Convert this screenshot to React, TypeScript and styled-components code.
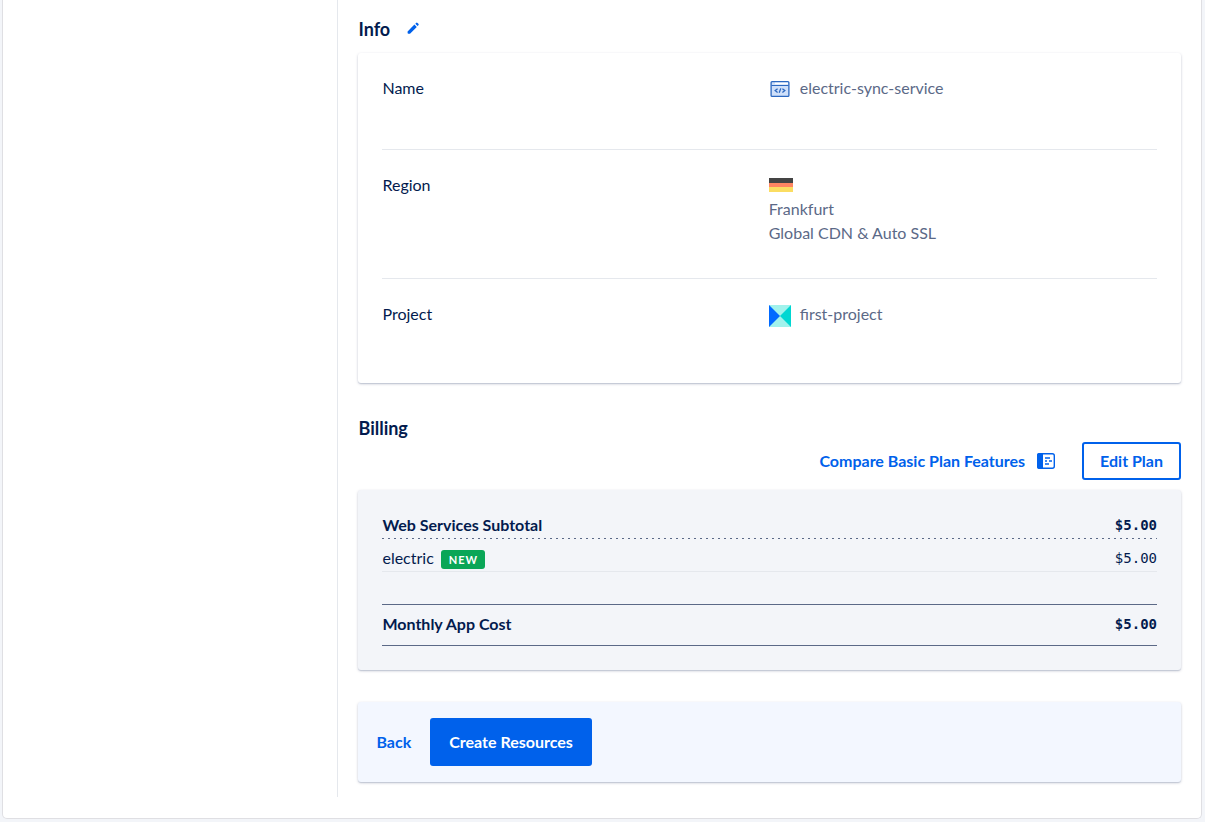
import React from "react";
import styled, { createGlobalStyle } from "styled-components";

const Global = createGlobalStyle`
  * { box-sizing: border-box; }
  body {
    margin: 0;
    background: #f3f5f9;
    color: #031b4e;
    font: 400 16px/24px Lato, "Open Sans", sans-serif;
  }
  button { font: inherit; cursor: pointer; }
`;

const Frame = styled.div`
  display: flex;
  margin: 0 3px 3px 2px;
  padding-bottom: 21px;
  background: #fff;
  border: 1px solid #dfdfe3;
  border-top: 0;
  border-radius: 0 0 5px 5px;
`;

const Sidebar = styled.aside`
  flex: 0 0 28%;
  border-right: 1px solid #e5e8ed;
`;

const Main = styled.main`
  flex: 1;
  min-width: 0;
  padding: 17px 20px 15px;
`;

const Heading = styled.h2`
  margin: 0;
  font-size: 18px;
  line-height: 24px;
  font-weight: 700;
`;

const HeadingRow = styled.div`
  display: flex;
  align-items: center;
  gap: 15px;
  margin-bottom: 12px;
`;

const IconButton = styled.button`
  display: flex;
  padding: 0;
  border: 0;
  background: none;
  color: #0061eb;
`;

const Card = styled.section<{ $fill?: string }>`
  background: ${(p) => p.$fill ?? "#fff"};
  border-radius: 3px;
  box-shadow: 0 1px 3px rgba(3, 27, 78, 0.2), 0 1px 1px rgba(3, 27, 78, 0.12);
`;

const InfoCard = styled(Card)`
  padding: 0 24px 8px;
  margin-bottom: 33px;
`;

const InfoList = styled.dl`
  margin: 0;
`;

const InfoRow = styled.div`
  display: grid;
  grid-template-columns: calc(50% - 1px) 1fr;
  padding: 23px 0 33px;
  & + & { border-top: 1px solid #e5e8ed; }
`;

const Term = styled.dt`
  min-height: 40px;
`;

const Value = styled.dd`
  margin: 0;
  color: #5b6987;
  svg { display: block; }
`;

const IconValue = styled.div`
  display: flex;
  gap: 9px;
  svg { margin-top: 3px; }
`;

const FlagLine = styled.div`
  padding: 5px 0;
`;

const PlanBar = styled.div`
  display: flex;
  justify-content: flex-end;
  align-items: center;
  gap: 26px;
  margin: 2px 0 10px;
`;

const TextLink = styled.a`
  display: flex;
  align-items: center;
  gap: 11px;
  color: #0061eb;
  font-weight: 700;
  text-decoration: none;
`;

const OutlineButton = styled.button`
  padding: 5px 16px;
  border: 2px solid #0061eb;
  border-radius: 3px;
  background: #fff;
  color: #0061eb;
  && { font-weight: 700; }
`;

const BillingCard = styled(Card)`
  padding: 24px;
  margin-bottom: 32px;
`;

const BillingTable = styled.table`
  width: 100%;
  border-collapse: collapse;
  th, td { padding: 0; font-weight: inherit; text-align: left; }
  td { text-align: right; font-family: "DejaVu Sans Mono", monospace; font-size: 14px; }
`;

const SubtotalRow = styled.tr`
  height: 25px;
  font-weight: 700;
  background: repeating-linear-gradient(90deg, #5b6987 0 2px, transparent 2px 6px) bottom / 100% 1px no-repeat;
  && > * { padding-bottom: 4px; line-height: 20px; }
`;

const ItemRow = styled.tr`
  height: 32px;
  border-bottom: 1px solid #e5e8ed;
  && > * { padding-top: 7px; }
`;

const SpacerRow = styled.tr`
  height: 33px;
`;

const TotalRow = styled.tr`
  height: 41px;
  font-weight: 700;
  border-top: 1px solid #5b6987;
  border-bottom: 1px solid #5b6987;
  && > * { padding-bottom: 2px; }
`;

const Badge = styled.span`
  display: inline-block;
  margin-left: 7px;
  padding: 0 7px 0 8px;
  border-radius: 3px;
  background: #0aa657;
  color: #fff;
  font-size: 11px;
  line-height: 19px;
  font-weight: 700;
  letter-spacing: 1px;
`;

const ActionCard = styled(Card)`
  display: flex;
  align-items: center;
  gap: 19px;
  padding: 16px 18px;
`;

const PrimaryButton = styled.button`
  height: 48px;
  padding: 0 19px;
  border: 0;
  border-radius: 3px;
  background: #0061eb;
  color: #fff;
  && { font-weight: 700; }
`;

const PencilIcon = () => (
  <svg width="16" height="16" viewBox="0 0 16 16" fill="currentColor" aria-hidden="true">
    <path d="M2.6 10.4 9.4 3.6l2.4 2.4-6.8 6.8H3.4a.8.8 0 0 1-.8-.8zM10.3 2.7l.8-.8a1 1 0 0 1 1.4 0l.9.9a1 1 0 0 1 0 1.4l-.8.8z" />
  </svg>
);

const ServiceIcon = () => (
  <svg width="22" height="22" viewBox="0 0 22 22" fill="none" aria-hidden="true">
    <rect x="2.1" y="2.6" width="17.8" height="14.8" rx="1" fill="#cfe0fa" stroke="#2c68c0" strokeWidth="1.3" />
    <path d="M6 4.5h13" stroke="#fff" strokeWidth="1.6" />
    <path d="M2.5 6.5h17" stroke="#2c68c0" />
    <path d="M8.6 9.8 6.2 11.6l2.4 1.8M13.4 9.8l2.4 1.8-2.4 1.8M11.8 9.4l-1.6 4.4" stroke="#2c68c0" strokeWidth="1.3" />
  </svg>
);

const GermanyFlag = () => (
  <svg width="24" height="14" viewBox="0 0 24 14" role="img" aria-label="Germany">
    <path fill="#444" d="M0 0h24v5H0z" />
    <path fill="#ff8562" d="M0 5h24v4H0z" />
    <path fill="#fbdd62" d="M0 9h24v5H0z" />
  </svg>
);

const ProjectIcon = () => (
  <svg width="22" height="22" viewBox="0 0 22 22" aria-hidden="true">
    <path fill="#a1f2ec" d="M0 0h22v22H0z" />
    <path fill="#0069ff" d="M0 0l11 11L0 22z" />
    <path fill="#00d7d2" d="M22 0 11 11l11 11z" />
  </svg>
);

const PanelIcon = () => (
  <svg width="20" height="20" viewBox="0 0 20 20" fill="none" aria-hidden="true">
    <rect x="1.7" y="2.7" width="16.6" height="14.6" rx="2" stroke="#0061eb" strokeWidth="1.4" />
    <path d="M3 2h4v16H3a2 2 0 0 1-2-2V4a2 2 0 0 1 2-2z" fill="#0061eb" />
    <path d="M9 7h5M9 10h2M13 10h3M9 13h4" stroke="#0061eb" strokeWidth="1.4" />
  </svg>
);

export default function App() {
  return (
    <>
      <Global />
      <Frame>
        <Sidebar />
        <Main>
          <HeadingRow>
            <Heading>Info</Heading>
            <IconButton type="button" aria-label="Edit info"><PencilIcon /></IconButton>
          </HeadingRow>
          <InfoCard>
            <InfoList>
              <InfoRow>
                <Term>Name</Term>
                <Value><IconValue><ServiceIcon />electric-sync-service</IconValue></Value>
              </InfoRow>
              <InfoRow>
                <Term>Region</Term>
                <Value>
                  <FlagLine><GermanyFlag /></FlagLine>
                  <div>Frankfurt</div>
                  <div>Global CDN &amp; Auto SSL</div>
                </Value>
              </InfoRow>
              <InfoRow>
                <Term>Project</Term>
                <Value><IconValue><ProjectIcon />first-project</IconValue></Value>
              </InfoRow>
            </InfoList>
          </InfoCard>

          <Heading>Billing</Heading>
          <PlanBar>
            <TextLink href="#plans">Compare Basic Plan Features<PanelIcon /></TextLink>
            <OutlineButton type="button">Edit Plan</OutlineButton>
          </PlanBar>
          <BillingCard $fill="#f3f5f9">
            <BillingTable>
              <tbody>
                <SubtotalRow><th scope="row">Web Services Subtotal</th><td>$5.00</td></SubtotalRow>
                <ItemRow><th scope="row">electric<Badge>NEW</Badge></th><td>$5.00</td></ItemRow>
                <SpacerRow><td colSpan={2} /></SpacerRow>
                <TotalRow><th scope="row">Monthly App Cost</th><td>$5.00</td></TotalRow>
              </tbody>
            </BillingTable>
          </BillingCard>

          <ActionCard $fill="#f3f7ff">
            <TextLink href="#back">Back</TextLink>
            <PrimaryButton type="button">Create Resources</PrimaryButton>
          </ActionCard>
        </Main>
      </Frame>
    </>
  );
}
